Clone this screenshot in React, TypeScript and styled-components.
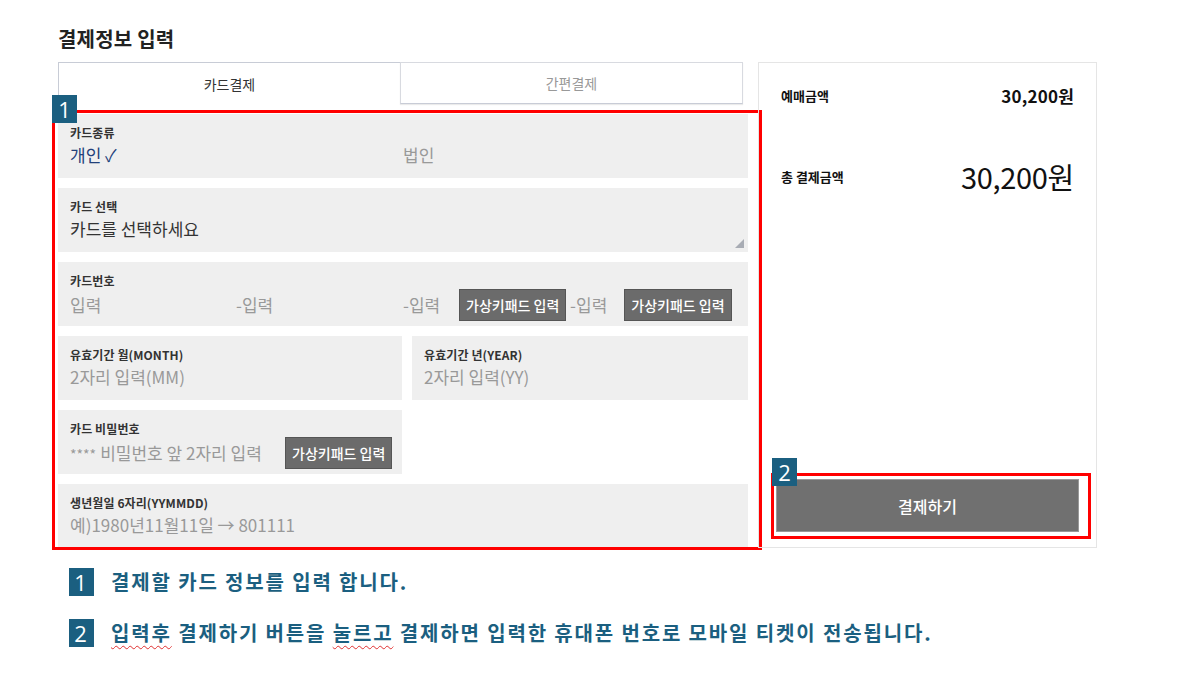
import styled, { createGlobalStyle } from "styled-components";

const GlobalStyle = createGlobalStyle`
  html, body {
    margin: 0;
    padding: 0;
    background: #ffffff;
  }
  body {
    font-family: "Noto Sans CJK KR", "Noto Sans", sans-serif;
    color: #333;
  }
`;

const Page = styled.div`
  position: relative;
  width: 1187px;
  height: 696px;
  padding: 27px 0 0 58px;
  box-sizing: border-box;
`;

const Title = styled.h2`
  margin: 0 0 11px;
  font-size: 20px;
  font-weight: 700;
  line-height: 24px;
  color: #222;
  letter-spacing: 0.2px;
`;

const Main = styled.div`
  display: flex;
  gap: 10px;
  align-items: stretch;
`;

const LeftCol = styled.div`
  position: relative;
  width: 690px;
`;

const Tabs = styled.div`
  display: flex;
  width: 685px;
  height: 42px;
  margin-bottom: 10px;
`;

const Tab = styled.div<{ $active?: boolean }>`
  flex: 1;
  display: flex;
  align-items: center;
  justify-content: center;
  font-size: 14px;
  box-sizing: border-box;
  background: #fff;
  color: ${({ $active }) => ($active ? "#333" : "#999")};
  border: 1px solid ${({ $active }) => ($active ? "#c8ccd6" : "#d8dae0")};
  border-bottom: ${({ $active }) => ($active ? "none" : "1px solid #c8ccd6")};
  border-right: ${({ $active }) => ($active ? "none" : "1px solid #d8dae0")};
  box-shadow: ${({ $active }) => ($active ? "none" : "0 1px 1px rgba(0,0,0,0.08)")};
`;

const Fields = styled.div`
  display: grid;
  grid-template-columns: 344px 1fr;
  gap: 10px;
`;

const Field = styled.div<{ $full?: boolean }>`
  position: relative;
  grid-column: ${({ $full }) => ($full ? "1 / -1" : "auto")};
  height: 64px;
  box-sizing: border-box;
  background: #efefef;
  padding: 11px 12px 0;
`;

const Label = styled.div`
  font-size: 12px;
  font-weight: 700;
  color: #333;
  line-height: 16px;
  letter-spacing: 0.1px;
`;

const Value = styled.div<{ $dark?: boolean }>`
  display: flex;
  align-items: center;
  font-size: 17px;
  line-height: 28px;
  color: ${({ $dark }) => ($dark ? "#333" : "#999")};
  letter-spacing: 0;
`;

const Choice = styled.span<{ $selected?: boolean; $width?: number }>`
  width: ${({ $width }) => ($width ? `${$width}px` : "auto")};
  color: ${({ $selected }) => ($selected ? "#22407a" : "#999")};
`;

const Segment = styled.span<{ $width: number }>`
  width: ${({ $width }) => `${$width}px`};
  flex-shrink: 0;
`;

const Stars = styled.span`
  font-size: 14px;
  margin-right: 4px;
`;

const KeyButton = styled.span`
  display: inline-flex;
  align-items: center;
  justify-content: center;
  height: 32px;
  padding: 0 6px;
  background: #6b6b6b;
  color: #fff;
  font-size: 14px;
  font-weight: 500;
  letter-spacing: 0;
  border: 1px solid #555;
  box-sizing: border-box;
  flex-shrink: 0;
`;

const ResizeGrip = styled.svg`
  position: absolute;
  right: 4px;
  bottom: 4px;
`;

const SidePanel = styled.div`
  width: 339px;
  box-sizing: border-box;
  border: 1px solid #e5e5e5;
  padding: 20px 22px 15px;
  display: flex;
  flex-direction: column;
  position: relative;
`;

const PriceRow = styled.div<{ $big?: boolean }>`
  display: flex;
  justify-content: space-between;
  align-items: center;
  height: ${({ $big }) => ($big ? "40px" : "24px")};
  margin-top: ${({ $big }) => ($big ? "49px" : "0")};
`;

const PriceLabel = styled.span`
  font-size: 13px;
  font-weight: 700;
  color: #111;
`;

const PriceValue = styled.span<{ $big?: boolean }>`
  font-size: ${({ $big }) => ($big ? "29px" : "17px")};
  font-weight: ${({ $big }) => ($big ? 400 : 700)};
  color: #111;
  letter-spacing: ${({ $big }) => ($big ? "-0.3px" : "0.2px")};
`;

const PayButton = styled.button`
  margin-top: auto;
  margin-left: -5px;
  margin-right: -5px;
  height: 53px;
  background: #707070;
  color: #fff;
  border: 1px solid #999;
  font-family: inherit;
  font-size: 16px;
  font-weight: 500;
  cursor: pointer;
`;

const Highlight = styled.div<{ $top: number; $left: number; $w: number; $h: number }>`
  position: absolute;
  top: ${({ $top }) => `${$top}px`};
  left: ${({ $left }) => `${$left}px`};
  width: ${({ $w }) => `${$w}px`};
  height: ${({ $h }) => `${$h}px`};
  border: 3px solid #ff0000;
  box-sizing: border-box;
  pointer-events: none;
`;

const Badge = styled.span`
  display: inline-flex;
  align-items: center;
  justify-content: center;
  width: 25px;
  height: 28px;
  background: #1b5f80;
  color: #fff;
  font-size: 22px;
  font-weight: 400;
  font-family: "Open Sans", "Noto Sans", sans-serif;
  line-height: 1;
  flex-shrink: 0;
`;

const FloatBadge = styled(Badge)<{ $top: number; $left: number }>`
  position: absolute;
  top: ${({ $top }) => `${$top}px`};
  left: ${({ $left }) => `${$left}px`};
`;

const Notes = styled.div`
  display: flex;
  flex-direction: column;
  gap: 22px;
  margin: 19px 0 0 11px;
`;

const Note = styled.div`
  display: flex;
  align-items: center;
  gap: 17px;
  font-size: 20px;
  font-weight: 700;
  color: #1b5f80;
  letter-spacing: 1.85px;
`;

const Typo = styled.span`
  text-decoration: underline wavy #e03030 1px;
  text-underline-offset: 4px;
`;

export default function App() {
  return (
    <>
      <GlobalStyle />
      <Page>
        <Title>결제정보 입력</Title>
        <Main>
          <LeftCol>
            <Tabs>
              <Tab $active>카드결제</Tab>
              <Tab>간편결제</Tab>
            </Tabs>
            <Fields>
              <Field $full>
                <Label>카드종류</Label>
                <Value>
                  <Choice $selected $width={333}>개인 ✓</Choice>
                  <Choice>법인</Choice>
                </Value>
              </Field>
              <Field $full>
                <Label>카드 선택</Label>
                <Value $dark>카드를 선택하세요</Value>
                <ResizeGrip width="9" height="9" viewBox="0 0 9 9">
                  <polygon points="9,0 9,9 0,9" fill="#a8acb4" />
                </ResizeGrip>
              </Field>
              <Field $full>
                <Label>카드번호</Label>
                <Value>
                  <Segment $width={166}>입력</Segment>
                  <Segment $width={167}>-입력</Segment>
                  <Segment $width={56}>-입력</Segment>
                  <KeyButton>가상키패드 입력</KeyButton>
                  <Segment $width={58}>&nbsp;-입력</Segment>
                  <KeyButton>가상키패드 입력</KeyButton>
                </Value>
              </Field>
              <Field>
                <Label>유효기간 월(MONTH)</Label>
                <Value>2자리 입력(MM)</Value>
              </Field>
              <Field>
                <Label>유효기간 년(YEAR)</Label>
                <Value>2자리 입력(YY)</Value>
              </Field>
              <Field>
                <Label>카드 비밀번호</Label>
                <Value>
                  <Segment $width={215}>
                    <Stars>****</Stars>비밀번호 앞 2자리 입력
                  </Segment>
                  <KeyButton>가상키패드 입력</KeyButton>
                </Value>
              </Field>
              <div />
              <Field $full>
                <Label>생년월일 6자리(YYMMDD)</Label>
                <Value>예)1980년11월11일 → 801111</Value>
              </Field>
            </Fields>
            <Highlight $top={48} $left={-6} $w={710} $h={440} />
            <FloatBadge $top={33} $left={-6}>1</FloatBadge>
          </LeftCol>
          <SidePanel>
            <PriceRow>
              <PriceLabel>예매금액</PriceLabel>
              <PriceValue>30,200원</PriceValue>
            </PriceRow>
            <PriceRow $big>
              <PriceLabel>총 결제금액</PriceLabel>
              <PriceValue $big>30,200원</PriceValue>
            </PriceRow>
            <PayButton>결제하기</PayButton>
            <Highlight $top={410} $left={12} $w={320} $h={66} />
            <FloatBadge $top={395} $left={13}>2</FloatBadge>
          </SidePanel>
        </Main>
        <Notes>
          <Note>
            <Badge>1</Badge>
            <span>결제할 카드 정보를 입력 합니다.</span>
          </Note>
          <Note>
            <Badge>2</Badge>
            <span>
              <Typo>입력후</Typo> 결제하기 버튼을 <Typo>눌르고</Typo> 결제하면 입력한 휴대폰 번호로 모바일 티켓이 전송됩니다.
            </span>
          </Note>
        </Notes>
      </Page>
    </>
  );
}
